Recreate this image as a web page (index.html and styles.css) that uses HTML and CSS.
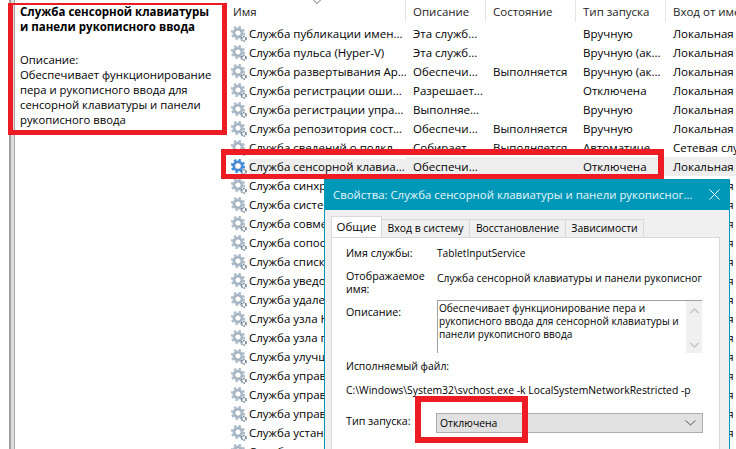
FILE: index.html
```html
<!DOCTYPE html>
<html lang="ru">
<head>
  <meta charset="UTF-8" />
  <title>Службы</title>
  <link rel="stylesheet" href="styles.css">
</head>
<body>
  <svg class="defs" width="0" height="0">
    <symbol id="gear" viewBox="0 0 16 16">
      <circle cx="7" cy="7" r="6" fill="none" stroke="currentColor" stroke-width="2.4" stroke-dasharray="2.3 2.4"/>
      <circle cx="7" cy="7" r="4.4" fill="none" stroke="currentColor" stroke-width="2.2"/>
      <circle cx="7" cy="7" r="3.1" fill="none" stroke="#52677a" stroke-width="1" opacity="0.6"/>
      <circle cx="7" cy="7" r="2.5" fill="#fff"/>
      <circle cx="12.8" cy="12.8" r="2.2" fill="none" stroke="#5c6f80" stroke-width="1.6" stroke-dasharray="1.2 1"/>
      <circle cx="12.8" cy="12.8" r="0.9" fill="#fff"/>
    </symbol>
  </svg>

  <div class="console">
    <aside class="details">
      <div class="details-text">
        <h2>Служба сенсорной клавиатуры и панели рукописного ввода</h2>
        <p>Описание:<br>Обеспечивает функционирование пера и рукописного ввода для сенсорной клавиатуры и панели рукописного ввода</p>
      </div>
    </aside>

    <table class="services">
      <colgroup>
        <col class="col-name"><col class="col-desc"><col class="col-state"><col class="col-start"><col class="col-logon">
      </colgroup>
      <thead>
        <tr><th>Имя</th><th>Описание</th><th>Состояние</th><th>Тип запуска</th><th>Вход от имени</th></tr>
      </thead>
      <tbody>
        <tr><td><span class="name"><svg class="gear"><use href="#gear"/></svg>Служба публикации имен...</span></td><td>Эта служб...</td><td></td><td>Вручную</td><td>Локальная служба</td></tr>
        <tr><td><span class="name"><svg class="gear"><use href="#gear"/></svg>Служба пульса (Hyper-V)</span></td><td>Эта служб...</td><td></td><td>Вручную (ак...</td><td>Локальная служба</td></tr>
        <tr><td><span class="name"><svg class="gear"><use href="#gear"/></svg>Служба развертывания Ap...</span></td><td>Обеспечи...</td><td>Выполняется</td><td>Вручную (ак...</td><td>Локальная служба</td></tr>
        <tr><td><span class="name"><svg class="gear"><use href="#gear"/></svg>Служба регистрации оши...</span></td><td>Разрешает...</td><td></td><td>Отключена</td><td>Локальная служба</td></tr>
        <tr><td><span class="name"><svg class="gear"><use href="#gear"/></svg>Служба регистрации упра...</span></td><td>Выполняе...</td><td></td><td>Вручную</td><td>Локальная служба</td></tr>
        <tr><td><span class="name"><svg class="gear"><use href="#gear"/></svg>Служба репозитория сост...</span></td><td>Обеспечи...</td><td>Выполняется</td><td>Вручную</td><td>Локальная служба</td></tr>
        <tr><td><span class="name"><svg class="gear"><use href="#gear"/></svg>Служба сведений о подкл...</span></td><td>Собирает...</td><td>Выполняется</td><td>Автоматиче...</td><td>Сетевая служба</td></tr>
        <tr class="selected"><td><span class="name"><svg class="gear"><use href="#gear"/></svg><span class="name-text">Служба сенсорной клавиа...</span></span></td><td>Обеспечи...</td><td></td><td>Отключена</td><td>Локальная служба</td></tr>
        <tr><td><span class="name"><svg class="gear"><use href="#gear"/></svg>Служба синхронизации</span></td><td></td><td></td><td></td><td>Локальная служба</td></tr>
        <tr><td><span class="name"><svg class="gear"><use href="#gear"/></svg>Служба системных</span></td><td></td><td></td><td></td><td>Локальная служба</td></tr>
        <tr><td><span class="name"><svg class="gear"><use href="#gear"/></svg>Служба совместимости</span></td><td></td><td></td><td></td><td>Локальная служба</td></tr>
        <tr><td><span class="name"><svg class="gear"><use href="#gear"/></svg>Служба сопоставления</span></td><td></td><td></td><td></td><td>Локальная служба</td></tr>
        <tr><td><span class="name"><svg class="gear"><use href="#gear"/></svg>Служба списка сетей</span></td><td></td><td></td><td></td><td>Локальная служба</td></tr>
        <tr><td><span class="name"><svg class="gear"><use href="#gear"/></svg>Служба уведомления</span></td><td></td><td></td><td></td><td>Локальная служба</td></tr>
        <tr><td><span class="name"><svg class="gear"><use href="#gear"/></svg>Служба удаленного</span></td><td></td><td></td><td></td><td>Локальная служба</td></tr>
        <tr><td><span class="name"><svg class="gear"><use href="#gear"/></svg>Служба узла HV</span></td><td></td><td></td><td></td><td>Локальная служба</td></tr>
        <tr><td><span class="name"><svg class="gear"><use href="#gear"/></svg>Служба узла поставщика</span></td><td></td><td></td><td></td><td>Локальная служба</td></tr>
        <tr><td><span class="name"><svg class="gear"><use href="#gear"/></svg>Служба улучшения</span></td><td></td><td></td><td></td><td>Локальная служба</td></tr>
        <tr><td><span class="name"><svg class="gear"><use href="#gear"/></svg>Служба управления</span></td><td></td><td></td><td></td><td>Локальная служба</td></tr>
        <tr><td><span class="name"><svg class="gear"><use href="#gear"/></svg>Служба управления</span></td><td></td><td></td><td></td><td>Локальная служба</td></tr>
        <tr><td><span class="name"><svg class="gear"><use href="#gear"/></svg>Служба управления</span></td><td></td><td></td><td></td><td>Локальная служба</td></tr>
        <tr><td><span class="name"><svg class="gear"><use href="#gear"/></svg>Служба установки</span></td><td></td><td></td><td></td><td>Локальная служба</td></tr>
        <tr><td><span class="name"><svg class="gear"><use href="#gear"/></svg>Служба</span></td><td></td><td></td><td></td><td>Локальная служба</td></tr>
      </tbody>
    </table>
    <span class="sort-mark"></span>
  </div>

  <section class="dialog">
    <header class="dialog-title">
      <span>Свойства: Служба сенсорной клавиатуры и панели рукописног...</span>
      <svg class="close" width="11" height="11" viewBox="0 0 11 11"><path d="M0.5 0.5 L10.5 10.5 M10.5 0.5 L0.5 10.5" stroke="#fff" stroke-width="1" fill="none"/></svg>
    </header>
    <div class="dialog-body">
      <nav class="tabs">
        <span class="tab tab-active">Общие</span>
        <span class="tab tab-logon">Вход в систему</span>
        <span class="tab tab-recovery">Восстановление</span>
        <span class="tab tab-deps">Зависимости</span>
      </nav>
      <div class="page">
        <div class="form-row row-service">
          <span>Имя службы:</span>
          <span class="value-small">TabletInputService</span>
        </div>
        <div class="form-row row-display">
          <span>Отображаемое<br>имя:</span>
          <span class="value">Служба сенсорной клавиатуры и панели рукописног</span>
        </div>
        <div class="form-row row-desc">
          <span>Описание:</span>
          <div class="memo">
            <div class="memo-text">Обеспечивает функционирование пера и рукописного ввода для сенсорной клавиатуры и панели рукописного ввода</div>
            <div class="memo-scroll">
              <svg width="9" height="6" viewBox="0 0 9 6"><path d="M0.5 5 L4.5 1 L8.5 5" stroke="#c4c4c4" stroke-width="1.5" fill="none"/></svg>
              <svg width="9" height="6" viewBox="0 0 9 6"><path d="M0.5 1 L4.5 5 L8.5 1" stroke="#c4c4c4" stroke-width="1.5" fill="none"/></svg>
            </div>
          </div>
        </div>
        <div class="exe-label">Исполняемый файл:</div>
        <div class="exe-path">C:\Windows\System32\svchost.exe -k LocalSystemNetworkRestricted -p</div>
        <div class="form-row row-start">
          <span>Тип запуска:</span>
          <div class="combo">
            <span>Отключена</span>
            <svg width="11" height="6" viewBox="0 0 11 6"><path d="M0.5 0.5 L5.5 5 L10.5 0.5" stroke="#555" stroke-width="1" fill="none"/></svg>
          </div>
        </div>
      </div>
    </div>
  </section>

  <div class="mark mark-details"></div>
  <div class="mark mark-row"></div>
  <div class="mark mark-combo"></div>
</body>
</html>
```

FILE: styles.css
```css
html,
body {
  margin: 0;
  padding: 0;
}

body {
  position: relative;
  width: 736px;
  height: 449px;
  overflow: hidden;
  background-color: #fff;
  color: #000;
  font-family: "Open Sans", "Noto Sans", sans-serif;
  font-size: 11.5px;
}

.defs {
  position: absolute;
}

.console {
  display: flex;
  height: 449px;
}

/* left description pane */
.details {
  box-sizing: border-box;
  flex: 0 0 224px;
  margin-left: 9px;
  margin-right: -9px;
  width: 215px;
  border-left: 2px solid #a0a0a0;
  background: linear-gradient(to right, #dcdcdc 3px, #a8a8a8 3px, #a8a8a8 4px, #fff 4px);
  padding: 4px 0 0 9px;
}

.details-text {
  width: 200px;
  line-height: 15px;
  font-size: 11.3px;
}

.details-text h2 {
  margin: 0 0 18px;
  font-size: 11.5px;
  font-weight: 700;
  line-height: 15px;
}

.details-text p {
  margin: 0;
}

/* services table */
.services {
  table-layout: fixed;
  width: 512px;
  flex: none;
  border-collapse: collapse;
  white-space: nowrap;
  align-self: flex-start;
}

.col-name { width: 182px; }
.col-desc { width: 80px; }
.col-state { width: 90px; }
.col-start { width: 90px; }
.col-logon { width: 70px; }

.services th {
  height: 24px;
  padding: 0 0 2px 7px;
  box-sizing: border-box;
  font-weight: 400;
  text-align: left;
  color: #222;
  background: linear-gradient(#e5e5e5, #e5e5e5) right 0 / 1px 22px no-repeat;
  overflow: hidden;
}

.services th:first-child {
  padding-left: 9px;
}

.services th:last-child {
  background: none;
}

.services td {
  height: 19px;
  padding: 0 0 0 7px;
  overflow: hidden;
}

.services tbody tr {
  height: 19px;
}

.name {
  display: flex;
  align-items: center;
  gap: 2px;
}

.gear {
  flex: none;
  width: 16px;
  height: 16px;
  color: #adbccb;
}

.selected td {
  background-color: #eee;
}

.selected td:first-child {
  background-color: #fff;
}

.selected .gear {
  color: #3a8ae0;
}

.selected .name-text {
  background-color: #eee;
  flex: 1;
  margin-right: -7px;
}

.sort-mark {
  position: absolute;
  left: 314px;
  top: -3px;
  width: 5px;
  height: 5px;
  border-right: 1px solid #999;
  border-bottom: 1px solid #999;
  transform: rotate(45deg);
}

/* properties window */
.dialog {
  position: absolute;
  left: 324px;
  top: 179px;
  width: 406px;
  height: 280px;
  box-sizing: border-box;
  border: solid #0098b9;
  border-width: 0 1px;
  background-color: #f0f0f0;
}

.dialog-title {
  display: flex;
  justify-content: space-between;
  align-items: center;
  height: 31px;
  padding: 0 9px 0 8px;
  background-color: #0098b9;
  color: #e6f6fa;
  font-size: 11.4px;
  white-space: nowrap;
}

.dialog-body {
  padding: 7px 9px 0 6px;
}

.tabs {
  display: flex;
  align-items: flex-end;
  height: 20px;
  position: relative;
  z-index: 1;
}

.tab {
  display: block;
  box-sizing: border-box;
  height: 18px;
  margin-right: -1px;
  line-height: 16px;
  text-align: center;
  background-color: #f0f0f0;
  border: 1px solid #d9d9d9;
  border-bottom: 0;
  font-size: 10.4px;
  white-space: nowrap;
}

.tab-active {
  height: 21px;
  width: 51px;
  line-height: 19px;
  background-color: #fff;
  font-size: 11.5px;
}

.tab-logon { width: 89px; }
.tab-recovery { width: 97px; }
.tab-deps { width: 79px; }

.page {
  height: 220px;
  box-sizing: border-box;
  background-color: #fff;
  border: 1px solid #d9d9d9;
  padding: 3px 0 0 14px;
  line-height: 13px;
  font-size: 10.7px;
}

.form-row {
  display: flex;
}

.form-row > span:first-child {
  flex: 0 0 91px;
}

.row-service {
  height: 24px;
  align-items: center;
}

.value-small {
  font-size: 10.2px;
}

.row-display {
  margin-top: 5px;
  height: 29px;
}

.row-display .value {
  padding-top: 2px;
  font-size: 10.3px;
  white-space: nowrap;
}

.row-desc {
  margin-top: 1px;
}

.row-desc > span:first-child {
  padding-top: 6px;
}

.memo {
  display: flex;
  box-sizing: border-box;
  width: 265px;
  height: 53px;
  border-top: 1px solid #a0a0a0;
  border-left: 1px solid #a0a0a0;
}

.memo-text {
  flex: 1;
  padding: 1px 0 0 1px;
  font-size: 10.1px;
}

.memo-scroll {
  flex: 0 0 16px;
  display: flex;
  flex-direction: column;
  justify-content: space-between;
  align-items: center;
  padding: 7px 0 5px;
  box-sizing: border-box;
  background-color: #f0f0f0;
}

.exe-label {
  margin-top: 7px;
  font-size: 10.4px;
}

.exe-path {
  margin-top: 11px;
  font-size: 10.4px;
  white-space: nowrap;
}

.row-start {
  margin-top: 16px;
  align-items: center;
}

.row-start > span:first-child {
  padding-bottom: 4px;
}

.combo {
  display: flex;
  justify-content: space-between;
  align-items: center;
  box-sizing: border-box;
  width: 267px;
  height: 20px;
  margin-left: -1px;
  padding: 0 6px 0 3px;
  background-color: #e1e1e1;
  border: 1px solid #adadad;
  font-size: 10.4px;
}

/* red annotation frames */
.mark {
  position: absolute;
  box-sizing: border-box;
  border: solid #ed1c24;
}

.mark-details {
  left: 8px;
  top: 3px;
  width: 219px;
  height: 132px;
  border-width: 2px 5px 5px 5px;
}

.mark-row {
  left: 221px;
  top: 149px;
  width: 443px;
  height: 30px;
  border-width: 6px 6px 5px 5px;
}

.mark-combo {
  left: 415px;
  top: 396px;
  width: 113px;
  height: 47px;
  border-width: 6px;
}
```
